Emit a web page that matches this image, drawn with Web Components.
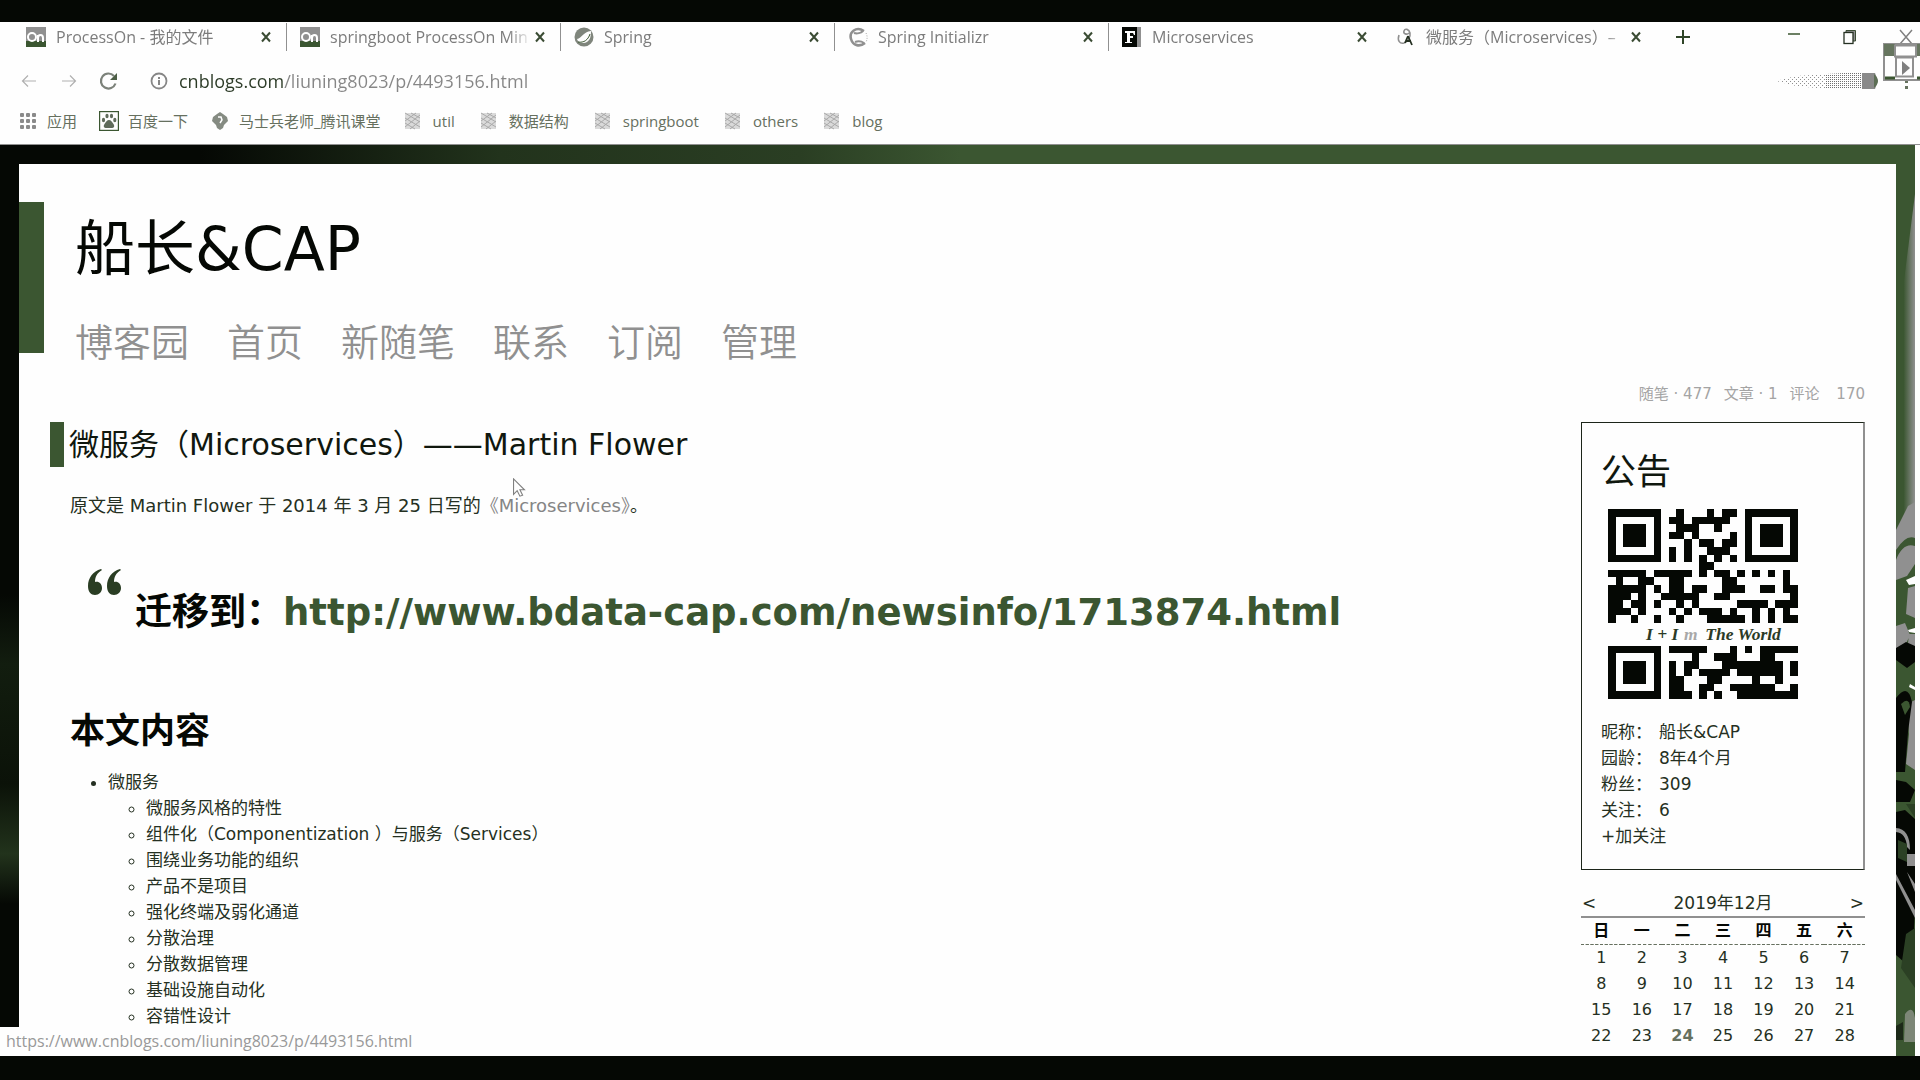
<!DOCTYPE html>
<html lang="zh-CN">
<head>
<meta charset="utf-8">
<title>微服务（Microservices）</title>
<style>
  html, body { margin: 0; height: 100%; }
  body {
    --ink: #050804; --text: #253022; --green: #3b5631; --grey: #909090; --paper: #fefefe;
    --ui: "Open Sans", "Noto Sans CJK SC", sans-serif;
    --doc: "DejaVu Sans", "Noto Sans CJK SC", sans-serif;
    background: var(--ink); overflow: hidden;
  }
</style>
</head>
<body>
<browser-window></browser-window>
<script>
const define = (name, html, setup) => customElements.define(name, class extends HTMLElement {
  constructor() {
    super();
    const t = document.createElement('template');
    t.innerHTML = html;
    this.attachShadow({ mode: 'open' }).append(t.content.cloneNode(true));
  }
  connectedCallback() { if (setup) setup(this, this.shadowRoot); }
});

/* ---- icons ---- */
const ICONS = {
  on: ['0 0 20 20', '<rect width="20" height="20" fill="#909090"/><path d="M0 14h20v6H0z" fill="#3b5631"/><circle cx="6" cy="10" r="4" fill="none" stroke="#fff" stroke-width="2"/><path d="M12 15V8m0 3c0-4 5-4 5 0v4" fill="none" stroke="#fff" stroke-width="2"/>'],
  spring: ['0 0 20 20', '<circle cx="10" cy="10" r="9.5" fill="#7f857c"/><path d="M3 12c5-1 6-7 14-8 0 6-1 11-7 12-4 .6-6-1-7-4z" fill="#fefefe"/><path d="M4 15c6 1 10-2 12-8" stroke="#3b5631" fill="none"/>'],
  init: ['0 0 20 20', '<path d="M16 4C8-1 1 5 3 12c2 7 9 8 14 4" fill="none" stroke="#909090" stroke-width="2.6"/><path d="M6 6c3 1 7 0 9-2M7 15c3-1 6-1 9 1" stroke="#909090" stroke-width="2" fill="none"/><path d="M18 6c1.500 3 1.500 6 0 9" stroke="#aaa" stroke-dasharray="1 1.5" fill="none"/>'],
  f: ['0 0 20 20', '<path d="M0 0h15v20H0z" fill="#050804"/><path d="M15 0h4v20h-4z" fill="#909090"/><path d="M3 4h10v4h-1l-1-2H8v3h3v2H8v4h2v1H3v-1h2V6H3z" fill="#fefefe"/>'],
  cn: ['0 0 20 20', '<path d="M3 8c-2 6 1 9 5 8 3-1 7-5 6-10-1-4-5-5-6-2s3 4 5 2" fill="none" stroke="#909090" stroke-width="1.6"/><path d="M12 9l4 9M12 9l-3 7M10 14h5" fill="none" stroke="#253022" stroke-width="1.8"/>'],
  close: ['0 0 16 16', '<path d="M4 3.500l8 9M12 3.500l-8 9" stroke="#3b4c34" stroke-width="2"/>'],
  plus: ['0 0 16 16', '<path d="M8 1v14M1 8h14" stroke="#2f4528" stroke-width="2"/>'],
  min: ['0 0 16 16', '<path d="M2 5h12" stroke="#3b5631" stroke-width="1.5"/>'],
  restore: ['0 0 16 16', '<path d="M4 3V1.500h9.500V12H11" fill="#909090" stroke="#3b4c34"/><rect x="2" y="3.500" width="9" height="11" fill="#fefefe" stroke="#253022" stroke-width="1.300"/>'],
  exit: ['0 0 16 16', '<path d="M2 1l12 14M14 1L2 15" stroke="#808080" stroke-width="1.500"/>'],
  back: ['0 0 16 16', '<path d="M15 8H2M7 2.500L1.500 8 7 13.500" fill="none" stroke="#b0b0b0" stroke-width="1.200"/>'],
  fwd: ['0 0 16 16', '<path d="M1 8h13M9 2.500L14.500 8 9 13.500" fill="none" stroke="#b0b0b0" stroke-width="1.200"/>'],
  reload: ['0 0 20 20', '<path d="M16.500 12.500A7.500 7.500 0 1 1 15 5" fill="none" stroke="#7c827a" stroke-width="2.200"/><path d="M18 2v7h-7z" fill="#4d5f46"/>'],
  info: ['0 0 20 20', '<circle cx="10" cy="10" r="7.500" fill="none" stroke="#868686" stroke-width="1.800"/><path d="M10 9v5M10 6v2" stroke="#868686" stroke-width="2"/>'],
  apps: ['0 0 20 20', '<g fill="#8a8a8a">' + [2, 8, 14].map(y => [2, 8, 14].map(x => `<rect x="${x}" y="${y}" width="4" height="4" rx="1"/>`).join('')).join('') + '</g>'],
  baidu: ['0 0 20 20', '<rect x=".6" y=".6" width="18.800" height="18.800" fill="none" stroke="#3b5631" stroke-width="1.200"/><g fill="#5f6b5a"><ellipse cx="4.500" cy="9" rx="1.600" ry="2.200"/><ellipse cx="8" cy="5" rx="1.600" ry="2.300"/><ellipse cx="12.500" cy="5" rx="1.600" ry="2.300"/><ellipse cx="15.800" cy="9" rx="1.600" ry="2.200"/><path d="M10 9c2 0 3 2 4.500 4 2 3-.5 4.500-2.500 4h-4c-2 .5-4.500-1-2.500-4C7 11 8 9 10 9z"/></g>'],
  ke: ['0 0 20 20', '<path d="M10 1l3 2 4 3 1 4-4 4-1 3-3 2-3-2-1-3-4-4 1-4 4-3z" fill="#858b82"/><path d="M8 6h3l1 3-2 3" fill="none" stroke="#fefefe" stroke-width="1.500"/>'],
  folder: ['0 0 20 20', '<path d="M2 2h15v16H2z" fill="#dadada"/><path d="M2 2l15 9M2 7l15 9M2 12l10 6M8 2l9 5M2 16l15-12M2 10l11-8M7 18l10-8" stroke="#aaa" stroke-width="1"/>'],
  quote: ['0 0 36 28', '<g fill="#2a3d23"><path d="M14 1C6 3 1 10 1 18c0 6 3 9 7 9s7-3 7-7-3-7-7-6c0-5 2-9 7-12z"/><path d="M33 1c-8 2-13 9-13 17 0 6 3 9 7 9s7-3 7-7-3-7-7-6c0-5 2-9 7-12z"/></g>'],
  cursor: ['0 0 14 22', '<path d="M1 1v17l4-4 3 6 3-1-3-6h5z" fill="#fefefe" stroke="#808080" stroke-width="1.200"/>'],
  dots: ['0 0 6 20', '<path d="M1 4h3v3H1zM1 10h3v3H1z" fill="#66735f"/>'],
  smear: ['0 0 104 20', '<defs><pattern id="d" width="4" height="4" patternUnits="userSpaceOnUse"><path d="M0 0h1v1H0zM2 2h1v1H2zM2 0h1v1H2zM0 2h1v1H0z" fill="#707070"/></pattern><pattern id="e" width="4" height="4" patternUnits="userSpaceOnUse"><path d="M0 0h1v1H0zM2 2h1v1H2z" fill="#909090"/></pattern></defs><path d="M0 10L20 5 50 3V18L20 15z" fill="url(#e)"/><path d="M50 3L86 1V18L50 18z" fill="url(#d)"/><path d="M86 2h13q4 8 0 16H86z" fill="#8a8a8a"/><path d="M98 3q8 7 0 14z" fill="#5c6e55"/>'],
  overlay: ['0 0 38 38', '<path d="M1 1h37v36H1z" fill="#fefefe" stroke="#909090" stroke-width="2"/><path d="M1 1h11v12H1z" fill="#66755f"/><path d="M12 2.500h21v11H12z" fill="#fefefe" stroke="#909090" stroke-width="2"/><path d="M13 14.500h17v19H13z" fill="#fefefe" stroke="#909090" stroke-width="2"/><path d="M19 18l8 7-8 7z" fill="#808080"/><path d="M2 35h10M34 35h4" stroke="#3b5631" stroke-width="3"/><path d="M34 1h4v12h-4z" fill="#66755f"/>']
};
define('ui-icon', `<style>:host{display:block;flex:none;width:20px;height:20px}svg{display:block;width:100%;height:100%}</style>`, (el, root) => {
  const [box, body] = ICONS[el.getAttribute('name')];
  root.innerHTML += `<svg viewBox="${box}" aria-hidden="true">${body}</svg>`;
});

/* ---- browser chrome ---- */
define('browser-tab', `<style>
  :host{display:flex;align-items:center;flex:0 1 274px;min-width:0;height:28px;box-sizing:border-box;padding:0 12px 0 13px;border-right:1px solid transparent}
  :host([divided]){border-right-color:#909090}
  .label{flex:1;min-width:0;margin:0 0 0 10px;overflow:hidden;white-space:nowrap;font:16px/26px var(--ui);color:#7c7c7c;-webkit-mask-image:linear-gradient(90deg,#000 88%,transparent)}
  button{border:0;padding:0;background:none;width:16px;height:16px}
  button ui-icon{width:16px;height:16px}
</style><slot name="icon"></slot><div class="label"><slot></slot></div><button aria-label="关闭标签页"><ui-icon name="close"></ui-icon></button>`);

define('tab-strip', `<style>
  :host{display:flex;align-items:center;height:29px;padding-left:13px}
  .tabs{display:flex;flex:1;min-width:0;align-items:center}
  button{border:0;padding:0;background:none;flex:none}
  .new{margin-left:18px}
  .win{display:flex;gap:40px;padding-right:6px}
  ui-icon.s{width:16px;height:16px}
</style><div class="tabs">
  <browser-tab divided><ui-icon slot="icon" name="on"></ui-icon>ProcessOn - 我的文件</browser-tab>
  <browser-tab divided><ui-icon slot="icon" name="on"></ui-icon>springboot ProcessOn Min</browser-tab>
  <browser-tab divided><ui-icon slot="icon" name="spring"></ui-icon>Spring</browser-tab>
  <browser-tab divided><ui-icon slot="icon" name="init"></ui-icon>Spring Initializr</browser-tab>
  <browser-tab><ui-icon slot="icon" name="f"></ui-icon>Microservices</browser-tab>
  <browser-tab><ui-icon slot="icon" name="cn"></ui-icon>微服务（Microservices）–</browser-tab>
  <button class="new" aria-label="新标签页"><ui-icon class="s" name="plus"></ui-icon></button>
</div><div class="win">
  <button aria-label="最小化"><ui-icon class="s" name="min"></ui-icon></button>
  <button aria-label="还原"><ui-icon class="s" name="restore"></ui-icon></button>
  <button aria-label="关闭"><ui-icon class="s" name="exit"></ui-icon></button>
</div>`);

define('address-bar', `<style>
  :host{display:flex;align-items:center;height:59px;padding:0 10px 0 21px}
  button{border:0;padding:0;background:none;flex:none}
  .s{width:16px;height:16px}
  .nav{display:flex;align-items:center;gap:22px;margin-right:30px}
  .nav button:first-child{margin-right:2px}
  label{display:flex;align-items:center;flex:1;min-width:0;gap:10px}
  input{flex:1;min-width:0;border:0;outline:0;padding:0;height:30px;font:18px/30px var(--ui);color:transparent;
    background:linear-gradient(90deg,#2b3a26 105px,#868686 105px);-webkit-background-clip:text;background-clip:text}
  .smear{width:104px}
  .dots{width:6px;margin-left:24px;margin-top:10px}
</style><div class="nav">
  <button aria-label="后退"><ui-icon class="s" name="back"></ui-icon></button>
  <button aria-label="前进"><ui-icon class="s" name="fwd"></ui-icon></button>
  <button aria-label="刷新"><ui-icon name="reload"></ui-icon></button></div>
<label><ui-icon name="info"></ui-icon><input aria-label="地址" type="text" value="cnblogs.com/liuning8023/p/4493156.html"></label>
<ui-icon class="smear" name="smear"></ui-icon>
<button aria-label="菜单"><ui-icon class="dots" name="dots"></ui-icon></button>`);

define('bookmark-bar', `<style>
  :host{display:flex;align-items:center;gap:22px;height:22px;padding:0 18px 12px}
  .folders{display:flex;gap:24px}
  a{display:flex;align-items:center;gap:9px;font:15px/22px var(--ui);color:#66705f;text-decoration:none;white-space:nowrap}
  .folders a{gap:10px}
</style>
<a href="#"><ui-icon name="apps"></ui-icon>应用</a>
<a href="#"><ui-icon name="baidu"></ui-icon>百度一下</a>
<a href="#"><ui-icon name="ke"></ui-icon>马士兵老师_腾讯课堂</a>
<div class="folders">
<a href="#"><ui-icon name="folder"></ui-icon>util</a>
<a href="#"><ui-icon name="folder"></ui-icon>数据结构</a>
<a href="#"><ui-icon name="folder"></ui-icon>springboot</a>
<a href="#"><ui-icon name="folder"></ui-icon>others</a>
<a href="#"><ui-icon name="folder"></ui-icon>blog</a>
</div>`);

/* ---- blog ---- */
define('blog-header', `<style>
  :host{display:flex;align-items:flex-start;gap:31px;padding-top:38px}
  .bar{width:25px;height:151px;background:var(--green)}
  h1{margin:0;font:400 60px/94px var(--doc);color:var(--ink)}
  nav{display:flex;gap:38px;margin-top:8px}
  a{font:38px/78px var(--doc);font-weight:350;color:var(--grey);text-decoration:none}
</style><div class="bar"></div><div><h1>船长&amp;CAP</h1>
<nav><a href="#">博客园</a><a href="#">首页</a><a href="#">新随笔</a><a href="#">联系</a><a href="#">订阅</a><a href="#">管理</a></nav></div>`);

define('blog-stats', `<style>
  :host{display:flex;justify-content:flex-end;gap:12px;padding-right:31px;font:15px/24px var(--doc);color:#a4a4a4;white-space:pre}
</style><span>随笔 · 477</span><span>文章 · 1</span><span>评论</span><span> 170</span>`);

define('blog-post', `<style>
  :host{display:block;flex:1;min-width:0;color:var(--text);font:17px/26px var(--doc)}
  h2{display:flex;align-items:center;gap:5px;height:45px;margin:0 0 26px;font:400 30px/47px var(--doc);color:#10170e}
  h2::before{content:"";width:14px;height:45px;background:var(--green)}
  .body{padding-left:20px}
  p{margin:0;font-size:18px}
  a{color:inherit;text-decoration:none}
  p a{color:#858585}
  blockquote{display:flex;gap:12px;margin:49px 0 69px 17px}
  blockquote ui-icon{width:36px;height:28px}
  blockquote strong{margin-top:19px;font:700 37px/52px var(--doc);color:var(--ink);white-space:nowrap}
  blockquote a{color:var(--green)}
  h3{margin:0 0 15px;font:700 35px/46px var(--doc);color:var(--ink)}
  ul{margin:0;padding-left:38px}
</style>
<h2>微服务（Microservices）——Martin Flower</h2>
<div class="body">
<p>原文是 Martin Flower 于 2014 年 3 月 25 日写的<a href="#">《Microservices》</a>。</p>
<blockquote><ui-icon name="quote"></ui-icon><strong>迁移到：<a href="#">http://www.bdata-cap.com/newsinfo/1713874.html</a></strong></blockquote>
<h3>本文内容</h3>
<ul><li><a href="#">微服务</a><ul>
<li><a href="#">微服务风格的特性</a></li>
<li><a href="#">组件化（Componentization ）与服务（Services）</a></li>
<li><a href="#">围绕业务功能的组织</a></li>
<li><a href="#">产品不是项目</a></li>
<li><a href="#">强化终端及弱化通道</a></li>
<li><a href="#">分散治理</a></li>
<li><a href="#">分散数据管理</a></li>
<li><a href="#">基础设施自动化</a></li>
<li><a href="#">容错性设计</a></li>
</ul></li></ul></div>`);

define('qr-code', `<style>:host{display:block;width:190px;height:190px}svg{display:block;width:100%;height:100%}</style>`, (el, root) => {
  const rows = {
    0: '9 13 15-16', 1: '8-9 11-15', 2: '9-11 14', 3: '8-9 11 16', 4: '10 12-13 15-16', 5: '8 10 13-15', 6: '8 10 12 14 16', 7: '12-13',
    8: '0-4 6-10 12 14-15 17 19 21 23', 9: '1 4-5 8-9 15-16 23', 10: '0-4 6 8-9 11-12 15-17 20-21 23-24', 11: '0-2 4 7-11 14-15 24',
    12: '0-1 3-4 6 9 11 17-20 22-24', 13: '0-2 4 8 10 12-14 16 19 21 23', 14: '0 3 6 9 13-17 19 21 23-24',
    18: '8-12 16 18 20-24', 19: '11 14-16 20-21', 20: '8 10-11 15-22 24', 21: '8 10 12-15 17-22 24', 22: '8-9 13-14 19 22', 23: '8-9 12-13 16-21 24', 24: '8-10 12 14 17-24'
  };
  let d = '';
  for (const y in rows) for (const run of rows[y].split(' ')) {
    const [a, b = a] = run.split('-').map(Number);
    d += `M${a} ${y}h${b - a + 1}v1H${a}z`;
  }
  for (const [x, y] of [[0, 0], [18, 0], [0, 18]]) d += `M${x} ${y}h7v7h-7zM${x + 1} ${y + 1}v5h5v-5zM${x + 2} ${y + 2}h3v3h-3z`;
  root.innerHTML += `<svg viewBox="0 0 25 25" role="img" aria-label="二维码"><path d="${d}" fill="#050804" shape-rendering="crispEdges"/>
    <g font-family="Liberation Serif" font-style="italic" font-weight="700" font-size="2.300" fill="#2b3a26"><text x="5" y="17.200">I + I</text><text x="10" y="17.200" fill="#a8a8a8">m</text><text x="12.800" y="17.200">The World</text></g></svg>`;
});

define('notice-card', `<style>
  :host{display:block;border:1px solid #1c2519;border-right:2px solid var(--grey);box-sizing:border-box;height:448px;padding:24px 19px;font:17px/26px var(--doc);color:var(--text)}
  h3{margin:0;font:400 35px/50px var(--doc);color:#10170e}
  qr-code{margin:12px 0 20px 7px}
  dl{display:grid;grid-template-columns:max-content 1fr;column-gap:7px;margin:0}
  dd{margin:0}
  a{color:inherit;text-decoration:none}
</style><h3>公告</h3><qr-code></qr-code>
<dl><dt>昵称：</dt><dd><a href="#">船长&amp;CAP</a></dd><dt>园龄：</dt><dd><a href="#">8年4个月</a></dd><dt>粉丝：</dt><dd><a href="#">309</a></dd><dt>关注：</dt><dd><a href="#">6</a></dd></dl>
<a href="#">+加关注</a>`);

define('month-calendar', `<style>
  :host{display:block;margin-top:20px;font:17px/26px var(--doc);color:var(--text)}
  header{display:flex;justify-content:space-between;border-bottom:2px solid var(--grey)}
  header button{border:0;padding:0 1px;background:none;font:inherit;color:inherit}
  table{width:100%;table-layout:fixed;border-collapse:collapse;text-align:center;font-size:16px}
  th,td{padding:0}
  th{color:var(--ink);border-bottom:1px dashed #66705f}
  .now{font-weight:700;color:#66705f}
</style><header><button aria-label="上个月">&lt;</button><span>2019年12月</span><button aria-label="下个月">&gt;</button></header>
<table><thead><tr><th>日</th><th>一</th><th>二</th><th>三</th><th>四</th><th>五</th><th>六</th></tr></thead><tbody></tbody></table>`, (el, root) => {
  let h = '';
  for (let w = 0; w < 4; w++) {
    h += '<tr>';
    for (let d = 1; d <= 7; d++) { const n = w * 7 + d; h += `<td${n === 24 ? ' class="now"' : ''}>${n}</td>`; }
    h += '</tr>';
  }
  root.querySelector('tbody').innerHTML = h;
});

define('photo-edge', `<style>:host{display:block;overflow:hidden}svg{display:block;width:100%;height:100%}</style>
<svg viewBox="0 0 19 892" preserveAspectRatio="none" aria-hidden="true">
<defs><linearGradient id="g" x1="0" x2="1"><stop offset=".4" stop-color="#909090" stop-opacity="0"/><stop offset="1" stop-color="#909090"/></linearGradient></defs>
<path d="M0 0h19v892H0z" fill="#3b5631"/><path d="M19 30L0 180V370H19z" fill="url(#g)"/>
<path d="M0 366Q8 350 12 342L19 338V400l-8 12-11 4z" fill="#909090"/>
<path d="M0 386q10-16 19-12v8q-12-4-19 14z" fill="#3b5631"/>
<path d="M10 416l9-4v8l-6 1zM12 466l7-2v5l-6-1zM14 520l5 3v3l-6-3z" fill="#fefefe"/>
<path d="M12 424l7-2v32l-9-4zM0 462l9-3 5 12-6 13H0zM13 470h6v28h-9zM11 540l8-4v70l-9-6 3-30z" fill="#909090"/>
<path d="M0 484l10-6 9 4v16l-8 6-11-8zM0 534q12-16 16 4l-4 30-3 40H0zM0 616l10 2 9 8-5 12H0z" fill="#050804"/>
<path d="M5 540q8-8 9 3l-5 8z" fill="#3b5631"/>
<path d="M0 640h19v12H0z" fill="#3b5631"/><path d="M0 648l9-2 10 9v90l-3 60-16-14z" fill="#050804"/>
<path d="M0 664q14 1 14 22l-3-3q-1-14-11-15zM0 710l19 36v8L0 716zM11 708l8 12v8zM11 690h8v12h-8z" fill="#909090"/>
<path d="M2 676l9 4v18l-9-4zM10 640h9v14zM10 770l9-6v60l-14-20z" fill="#2b4024"/>
<path d="M9 850q8-10 10 4v24H8z" fill="#7d8777"/><path d="M0 862l7-4v18H0z" fill="#1c2918"/>
</svg>`);

define('blog-page', `<style>
  :host{display:flex;align-items:stretch;position:relative;padding-top:19px;overflow:hidden;box-sizing:border-box;border-top:1px solid #909090;
    background:linear-gradient(90deg,#050804 200px,#22331c 500px,#2a3e23 800px,#3b5631 960px)}
  .left{flex:none;width:19px;background:linear-gradient(#050804 0 430px,#121d0f 500px,#0b1208 620px,#22331c 690px,#050804 740px)}
  photo-edge{flex:none;width:19px}
  .gap{flex:none;width:5px;margin-top:-19px;background:var(--paper)}
  .paper{flex:1;min-width:0;background:var(--paper)}
  .cols{display:flex;gap:40px;padding:16px 31px 0 31px}
  aside{flex:none;width:284px}
  .cursor{position:absolute;left:512px;top:333px;width:14px;height:20px}
</style><div class="left"></div>
<div class="paper"><blog-header></blog-header><blog-stats></blog-stats>
<div class="cols"><blog-post></blog-post><aside><notice-card></notice-card><month-calendar></month-calendar></aside></div></div>
<photo-edge></photo-edge><div class="gap"></div><ui-icon class="cursor" name="cursor"></ui-icon>`);

define('browser-window', `<style>
  :host{display:flex;flex-direction:column;position:relative;box-sizing:border-box;height:100vh;padding:22px 0 24px;background:var(--ink);overflow:hidden}
  .chrome{flex:none;background:var(--paper)}
  blog-page{flex:1;min-height:0}
  .overlay{position:absolute;right:-1px;top:43px;width:38px;height:38px}
  .status{position:absolute;left:0;bottom:24px;box-sizing:border-box;height:29px;padding:0 12px 0 6px;background:var(--paper);font:16px/29px var(--ui);color:#999}
</style><div class="chrome"><tab-strip></tab-strip><address-bar></address-bar><bookmark-bar></bookmark-bar></div>
<blog-page></blog-page>
<div class="status">https://www.cnblogs.com/liuning8023/p/4493156.html</div>
<ui-icon class="overlay" name="overlay"></ui-icon>`);
</script>
</body>
</html>
